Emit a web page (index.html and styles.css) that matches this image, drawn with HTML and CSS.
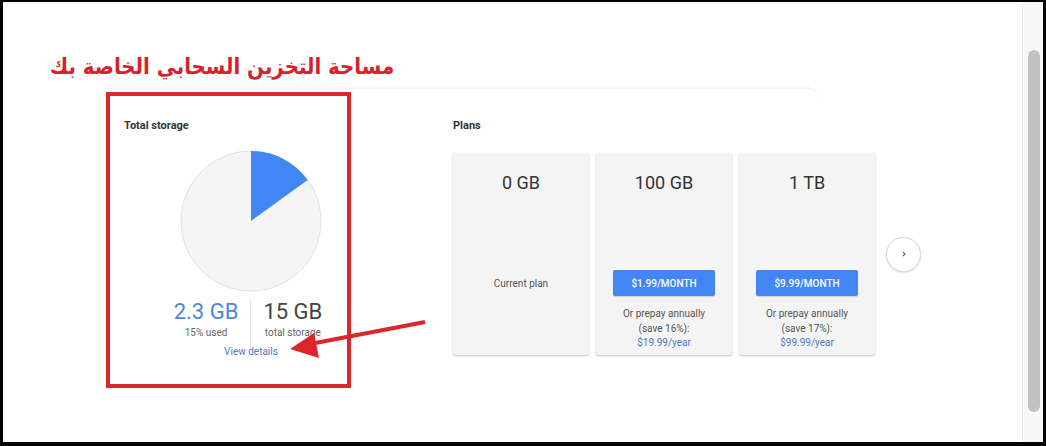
FILE: index.html
```html
<!DOCTYPE html>
<html lang="en">
<head>
<meta charset="utf-8">
<title>Storage</title>
<link rel="stylesheet" href="styles.css">
</head>
<body>
<div class="frame">
  <div class="main">
    <h1 class="title" dir="rtl" lang="ar">مساحة التخزين السحابي الخاصة بك</h1>
    <div class="panel">
      <section class="storage">
        <h2 class="label">Total storage</h2>
        <div class="chart-col">
          <svg class="pie" width="142" height="142" viewBox="0 0 142 142">
            <circle cx="71" cy="71" r="70" fill="#f5f5f5" stroke="#e2e2e2" stroke-width="1"/>
            <path d="M71 71 L71 1 A70 70 0 0 1 127.6 29.9 Z" fill="#4285f4"/>
          </svg>
          <div class="stats">
            <div class="stat">
              <div class="stat-num used">2.3 GB</div>
              <div class="stat-sub">15% used</div>
            </div>
            <div class="stat stat-right">
              <div class="stat-num">15 GB</div>
              <div class="stat-sub">total storage</div>
            </div>
          </div>
          <a class="details" href="#">View details</a>
        </div>
      </section>
      <section class="plans">
        <h2 class="label">Plans</h2>
        <div class="plan-row">
          <div class="plan">
            <div class="plan-size">0 GB</div>
            <div class="plan-action"><span class="current">Current plan</span></div>
          </div>
          <div class="plan">
            <div class="plan-size">100 GB</div>
            <div class="plan-action"><span class="btn">$1.99/MONTH</span></div>
            <div class="plan-note">Or prepay annually<br>(save 16%):<br><span class="price">$19.99/year</span></div>
          </div>
          <div class="plan">
            <div class="plan-size">1 TB</div>
            <div class="plan-action"><span class="btn">$9.99/MONTH</span></div>
            <div class="plan-note">Or prepay annually<br>(save 17%):<br><span class="price">$99.99/year</span></div>
          </div>
          <div class="next">
            <svg width="8" height="8" viewBox="0 0 8 8"><path d="M3 2 L5 4 L3 6" fill="none" stroke="#666" stroke-width="1.2"/></svg>
          </div>
        </div>
      </section>
    </div>
  </div>
  <div class="scrollbar"><div class="thumb"></div></div>
</div>
<svg class="arrow" width="1046" height="446" viewBox="0 0 1046 446">
  <line x1="425" y1="322" x2="310" y2="344" stroke="#e0242b" stroke-width="4"/>
  <polygon points="290,349 314,333 319,358" fill="#e0242b"/>
</svg>
</body>
</html>
```
FILE: styles.css
```css
* { box-sizing: border-box; }
html, body { margin: 0; padding: 0; }
body {
  background: #000;
  width: 1046px;
  height: 446px;
  position: relative;
  font-family: Roboto, "Liberation Sans", sans-serif;
  overflow: hidden;
}
.frame {
  margin: 2px 3px 0 3px;
  width: 1040px;
  height: 440px;
  background: #fff;
  display: flex;
}
.main {
  flex: 1;
  padding: 50px 0 0 47px;
}
.title {
  margin: 0;
  display: inline-block;
  font-family: "DejaVu Sans Condensed", "DejaVu Sans", sans-serif;
  font-weight: bold;
  font-size: 22px;
  line-height: 30px;
  color: #d6222a;
}
.panel {
  margin: 10px 0 0 56px;
  display: flex;
  position: relative;
}
.panel::before {
  content: "";
  position: absolute;
  left: 0;
  top: -4px;
  width: 714px;
  height: 14px;
  border-radius: 0 12px 0 0;
  box-shadow: 0 -1px 2px rgba(0,0,0,0.04);
  border-top: 1px solid #f3f3f3;
}
.storage {
  position: relative;
  width: 245px;
  height: 296px;
  border: 4px solid #dc272d;
  background: #fff;
  padding: 23px 0 0 14px;
}
.label {
  margin: 0;
  font-size: 11px;
  line-height: 13px;
  font-weight: bold;
  color: #333;
}
.chart-col {
  width: 200px;
  margin: 18px 0 0 27px;
  display: flex;
  flex-direction: column;
  align-items: center;
}
.pie { display: block; }
.stats {
  display: flex;
  margin: 7px 6px 0 0;
}
.stat {
  padding: 0 12px;
  text-align: center;
}
.stat-right { border-left: 1px solid #e6e6e6; padding-bottom: 10px; }
.stat-num {
  font-size: 22px;
  line-height: 26px;
  color: #444;
}
.stat-num.used { color: #4d87d6; }
.stat-sub {
  font-size: 10px;
  line-height: 13px;
  color: #666;
  margin-top: 1px;
}
.details {
  margin-top: -4px;
  font-size: 10px;
  line-height: 13px;
  color: #4a7cc4;
  text-decoration: none;
}
.plans {
  margin-left: 102px;
  padding-top: 27px;
}
.plan-row {
  display: flex;
  align-items: center;
  gap: 7px;
  margin-top: 21px;
}
.plan {
  width: 136px;
  height: 202px;
  background: #f4f4f4;
  box-shadow: 0 1px 2px rgba(0,0,0,0.22), 0 0 1px rgba(0,0,0,0.12);
  border-radius: 2px;
  padding-top: 19px;
  text-align: center;
}
.plan-size {
  font-size: 18px;
  line-height: 22px;
  color: #333;
}
.plan-action {
  margin: 76px 17px 0;
  height: 26px;
  display: flex;
  align-items: center;
  justify-content: center;
}
.current {
  font-size: 10px;
  color: #555;
}
.btn {
  display: flex;
  width: 100%;
  height: 26px;
  align-items: center;
  justify-content: center;
  background: #4285f4;
  border-radius: 2px;
  color: #fff;
  font-size: 10px;
  font-weight: 500;
  box-shadow: 0 1px 1px rgba(0,0,0,0.15);
}
.plan-note {
  margin-top: 11px;
  font-size: 10px;
  line-height: 14.5px;
  color: #555;
}
.price { color: #4a7cc4; }
.next {
  margin-left: 4px;
  width: 35px;
  height: 35px;
  border-radius: 50%;
  background: #fff;
  border: 1px solid #d8d8d8;
  box-shadow: 0 1px 2px rgba(0,0,0,0.12);
  display: flex;
  align-items: center;
  justify-content: center;
}
.scrollbar {
  width: 21px;
  background: #f8f8f8;
  border-left: 1px solid #ececec;
  padding: 48px 0 0 5px;
}
.thumb {
  width: 12px;
  height: 362px;
  border-radius: 6px;
  background: #c2c2c2;
}
.arrow {
  position: absolute;
  left: 0;
  top: 0;
  pointer-events: none;
}
```
